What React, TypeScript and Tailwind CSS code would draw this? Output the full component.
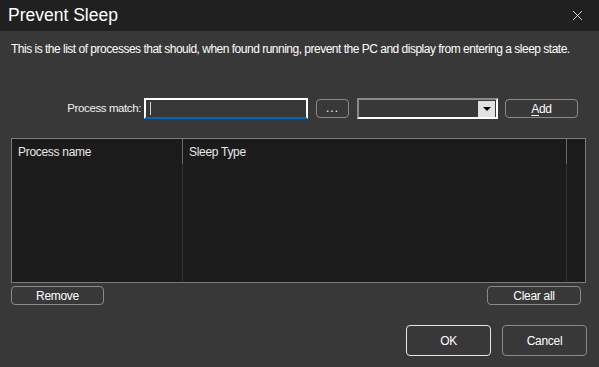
import { X } from "lucide-react";

function Btn({
  children,
  className = "",
}: {
  children: React.ReactNode;
  className?: string;
}) {
  return (
    <button
      className={`flex items-center justify-center rounded-[4px] border border-[#8a8a8a] bg-[#383838] text-[12px] text-white ${className}`}
    >
      {children}
    </button>
  );
}

export default function App() {
  return (
    <div
      className="w-[599px] h-[367px] bg-[#383838] flex flex-col text-white overflow-hidden tracking-[-0.3px]"
      style={{ fontFamily: '"Liberation Sans", Arial, sans-serif' }}
    >
      {/* title bar */}
      <div className="h-[31px] bg-[#202020] flex items-center justify-between pl-[8px] pr-[13px]">
        <span className="text-[17.5px] leading-none tracking-normal">Prevent Sleep</span>
        <X size={17} strokeWidth={1.1} className="text-white" />
      </div>

      {/* description */}
      <p className="mt-[10px] px-[11px] text-[12px] leading-[16px] whitespace-nowrap tracking-[-0.5px]">
        This is the list of processes that should, when found running, prevent the PC and display from entering a sleep state.
      </p>

      {/* form row */}
      <div className="mt-[41px] px-[11px] flex items-center h-[21px]">
        <label className="w-[130px] text-right text-[11.5px] tracking-[-0.4px] text-[#f0f0f0]">
          Process match:
        </label>
        <div className="ml-[3px] w-[164px] h-[21px] border-2 border-white border-b-[#0067c0] flex items-center pl-[4px]">
          <span className="w-px h-[13px] bg-[#d0d0d0]" />
        </div>
        <Btn className="ml-[8px] w-[33px] h-[19px] items-end pb-[3px] leading-none text-[10px] tracking-[1px]">
          ...
        </Btn>
        <div className="ml-[8px] w-[141px] h-[21px] border-2 border-t-[#8a8a8a] border-l-[#8a8a8a] border-r-white border-b-white flex items-center justify-end pr-[1px]">
          <div className="w-[17px] h-[16px] bg-[#e1e1e1] flex items-center justify-center">
            <svg width="8" height="4" viewBox="0 0 8 4">
              <path d="M0 0h8L4 4z" fill="#000" />
            </svg>
          </div>
        </div>
        <Btn className="ml-[7px] w-[73px] h-[19px]">
          <u className="underline-offset-2">A</u>dd
        </Btn>
      </div>

      {/* list */}
      <div className="mt-[19px] mx-[11px] w-[575px] h-[145px] border border-[#7a7a7a] bg-[#1b1b1b] flex">
        <div className="w-[170px] flex flex-col">
          <div className="h-[25px] flex items-center pl-[6px] text-[12px] text-[#e8e8e8]">
            Process name
          </div>
        </div>
        <div className="w-px flex flex-col">
          <div className="h-[25px] bg-[#6a6a6a]" />
          <div className="flex-1 bg-[#2c313a]" />
        </div>
        <div className="w-[383px] flex flex-col">
          <div className="h-[25px] flex items-center pl-[6px] text-[12px] text-[#e8e8e8]">
            Sleep Type
          </div>
        </div>
        <div className="w-px flex flex-col">
          <div className="h-[25px] bg-[#6a6a6a]" />
          <div className="flex-1 bg-[#2c313a]" />
        </div>
      </div>

      {/* remove / clear */}
      <div className="mt-[3px] pl-[11px] pr-[18px] flex justify-between">
        <Btn className="w-[93px] h-[19px]">Remove</Btn>
        <Btn className="w-[94px] h-[19px]">Clear all</Btn>
      </div>

      {/* ok / cancel */}
      <div className="mt-[20px] pr-[12px] flex justify-end gap-[11px]">
        <Btn className="w-[85px] h-[31px] border-[#e6e6e6]">OK</Btn>
        <Btn className="w-[85px] h-[31px]">Cancel</Btn>
      </div>
    </div>
  );
}
